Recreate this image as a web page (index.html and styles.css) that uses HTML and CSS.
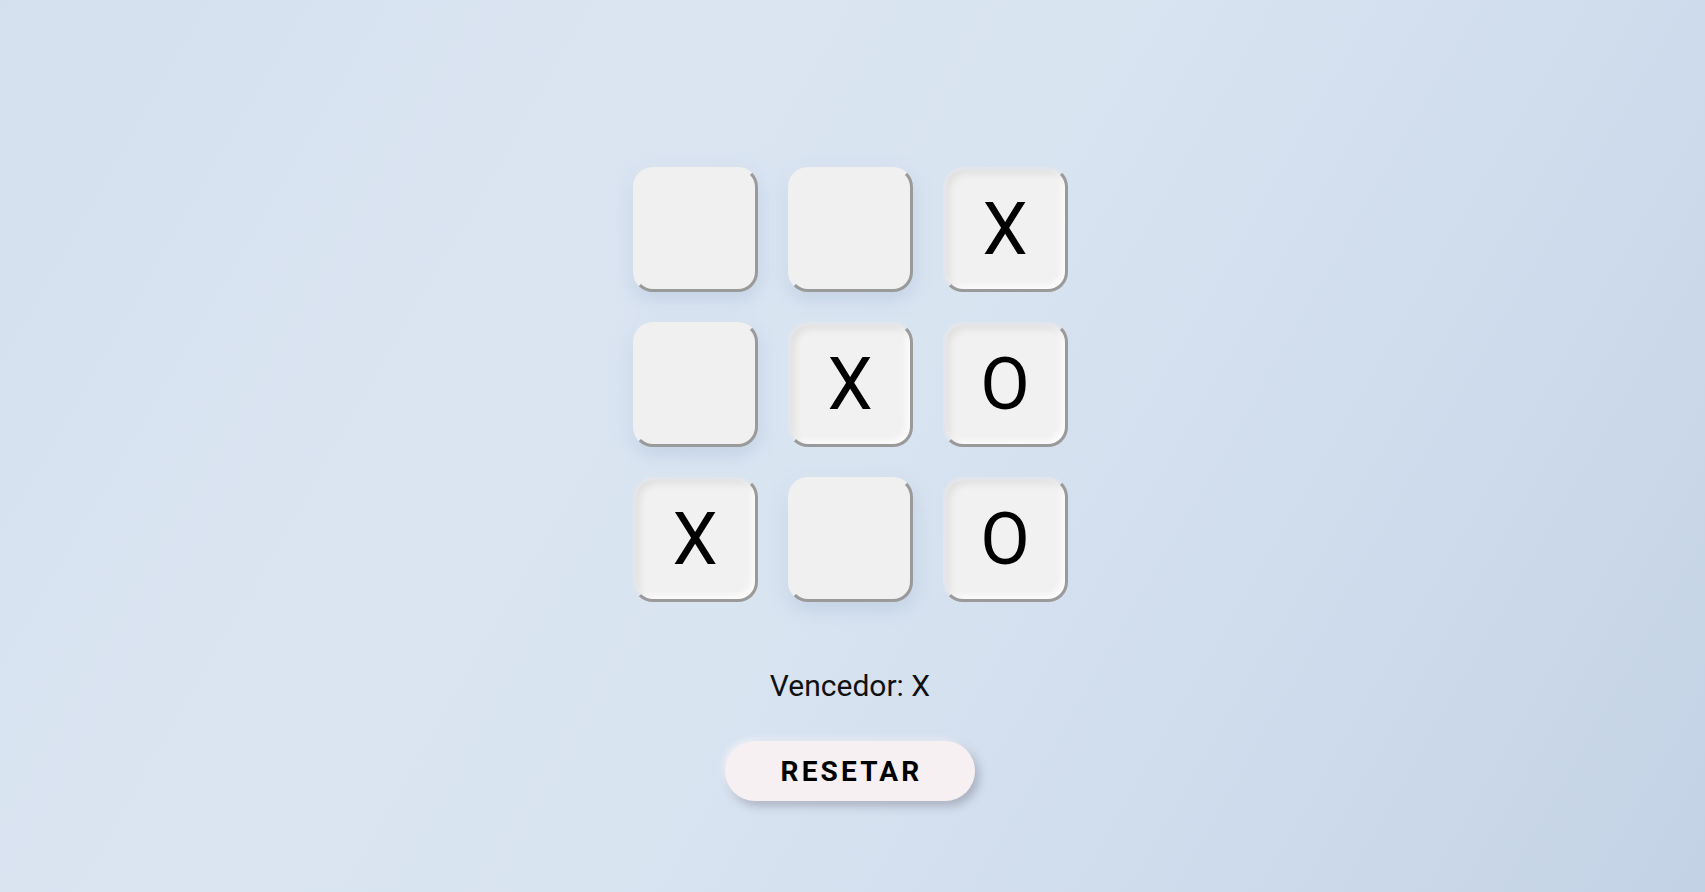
FILE: index.html
```html
<!DOCTYPE html>
<html lang="pt">
<head>
<meta charset="utf-8">
<title>Jogo da Velha</title>
<link rel="stylesheet" href="styles.css">
</head>
<body>
<main class="game">
  <div class="board">
    <div class="cell"></div>
    <div class="cell"></div>
    <div class="cell filled">X</div>
    <div class="cell"></div>
    <div class="cell filled">X</div>
    <div class="cell filled">O</div>
    <div class="cell filled">X</div>
    <div class="cell"></div>
    <div class="cell filled">O</div>
  </div>
  <p class="status">Vencedor: X</p>
  <button class="reset">RESETAR</button>
</main>
</body>
</html>
```
FILE: styles.css
```css
html, body {
  margin: 0;
  height: 100%;
}
body {
  background: linear-gradient(120deg, #d4e0ee 0%, #dbe5f2 30%, #d9e4f1 50%, #cfdcec 75%, #c3d2e5 100%);
  font-family: Roboto, "Liberation Sans", sans-serif;
  overflow: hidden;
}
.game {
  display: flex;
  flex-direction: column;
  align-items: center;
  padding: 167px 5px 0 0;
}
.board {
  display: grid;
  grid-template-columns: repeat(3, 125px);
  grid-auto-rows: 125px;
  gap: 30px;
}
.cell {
  box-sizing: border-box;
  border-radius: 20px;
  background: #f0f0f0;
  border: 3px solid transparent;
  border-right-color: #9a9a9a;
  border-bottom-color: #9a9a9a;
  box-shadow: 0 6px 18px rgba(140, 165, 200, 0.35), -2px 0 10px rgba(255, 255, 255, 0.3);
  display: flex;
  align-items: center;
  justify-content: center;
  font-size: 72px;
  line-height: 1;
  color: #000;
}
.cell.filled {
  border-top-color: #e2e6ec;
  border-left-color: #e2e6ec;
  background: #f1f1f2;
  box-shadow: inset 4px 4px 7px rgba(0, 0, 0, 0.07), inset -3px -3px 6px rgba(255, 255, 255, 0.9);
}
.status {
  margin: 67px 0 0;
  font-size: 30px;
  line-height: 34px;
  color: #111;
}
.reset {
  margin-top: 38px;
  width: 250px;
  height: 60px;
  border: none;
  border-radius: 30px;
  background: #f6f0f3;
  box-shadow: 4px 5px 10px rgba(90, 90, 110, 0.35), -2px -2px 6px rgba(255, 255, 255, 0.6);
  font-family: Roboto, "Liberation Sans", sans-serif;
  font-weight: 700;
  font-size: 28px;
  letter-spacing: 3.2px;
  padding: 0 0 0 3px;
  color: #000;
}
```
